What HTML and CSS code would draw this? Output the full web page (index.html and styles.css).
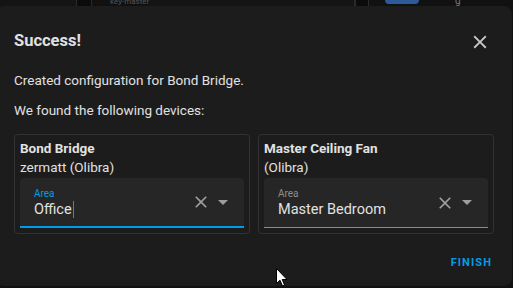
FILE: index.html
```html
<!DOCTYPE html>
<html>
<head>
<meta charset="utf-8">
<link rel="stylesheet" href="styles.css">
</head>
<body>
<div class="backdrop">
  <div class="bg-strip">
    <div class="bg-left"></div>
    <div class="bg-block"></div>
    <div class="bg-text">key-master</div>
    <div class="bg-spacer"></div>
    <div class="bg-block small"></div>
    <div class="bg-pill"></div>
    <div class="bg-g">g</div>
  </div>
  <div class="dialog">
    <div class="dialog-header">
      <h2 class="title">Success!</h2>
      <svg class="close" viewBox="0 0 24 24" width="22" height="22"><path d="M19,6.41L17.59,5L12,10.59L6.41,5L5,6.41L10.59,12L5,17.59L6.41,19L12,13.41L17.59,19L19,17.59L13.41,12L19,6.41Z" fill="#c8c8c8"/></svg>
    </div>
    <p class="text">Created configuration for Bond Bridge.</p>
    <p class="text">We found the following devices:</p>
    <div class="devices">
      <div class="card">
        <div class="name">Bond Bridge</div>
        <div class="model">zermatt (Olibra)</div>
        <div class="field focused">
          <div class="field-main">
            <div class="label">Area</div>
            <div class="value">Office<span class="caret"></span></div>
          </div>
          <svg class="clear" viewBox="0 0 24 24" width="20" height="20"><path d="M19,6.41L17.59,5L12,10.59L6.41,5L5,6.41L10.59,12L5,17.59L6.41,19L12,13.41L17.59,19L19,17.59L13.41,12L19,6.41Z" fill="#9e9e9e"/></svg>
          <svg class="arrow" viewBox="0 0 10 5" width="10" height="5"><path d="M0 0 L10 0 L5 5 Z" fill="#9e9e9e"/></svg>
        </div>
      </div>
      <div class="card">
        <div class="name">Master Ceiling Fan</div>
        <div class="model">(Olibra)</div>
        <div class="field">
          <div class="field-main">
            <div class="label">Area</div>
            <div class="value">Master Bedroom</div>
          </div>
          <svg class="clear" viewBox="0 0 24 24" width="20" height="20"><path d="M19,6.41L17.59,5L12,10.59L6.41,5L5,6.41L10.59,12L5,17.59L6.41,19L12,13.41L17.59,19L19,17.59L13.41,12L19,6.41Z" fill="#9e9e9e"/></svg>
          <svg class="arrow" viewBox="0 0 10 5" width="10" height="5"><path d="M0 0 L10 0 L5 5 Z" fill="#9e9e9e"/></svg>
        </div>
      </div>
    </div>
    <div class="actions">
      <span class="finish">FINISH</span>
    </div>
  </div>
  <svg class="cursor" viewBox="0 0 12 19" width="12" height="19"><path d="M0.5 0.5 L0.5 15.5 L4 12.2 L6.5 18 L8.6 17.1 L6.2 11.5 L11 11.5 Z" fill="#fff" stroke="#000" stroke-width="1"/></svg>
</div>
</body>
</html>
```

FILE: styles.css
```css
* { box-sizing: border-box; }
html, body {
  margin: 0;
  padding: 0;
  background: #111111;
  width: 513px;
  height: 288px;
  overflow: hidden;
  font-family: Roboto, "Noto Sans", sans-serif;
}
.backdrop {
  position: relative;
  width: 513px;
  height: 288px;
}
.bg-strip {
  display: flex;
  height: 6px;
  align-items: flex-start;
  overflow: hidden;
}
.bg-left {
  width: 77px;
  height: 6px;
  background: #141414;
  border-right: 1px solid #2a2a2a;
}
.bg-block {
  width: 15px;
  height: 6px;
  background: #0b0b0b;
  border-right: 1px solid #2a2a2a;
}
.bg-block.small { width: 14px; border-left: 1px solid #2a2a2a; }
.bg-text {
  margin-left: 18px;
  font-size: 8px;
  line-height: 4px;
  color: #555;
}
.bg-spacer { flex: 1; height: 6px; background: #141414; border-right: 1px solid #2a2a2a; }
.bg-pill {
  margin-left: 16px;
  width: 34px;
  height: 4px;
  background: #2f5a99;
  border-radius: 0 0 4px 4px;
}
.bg-g {
  margin-left: 36px;
  font-size: 10px;
  line-height: 2px;
  color: #777;
  width: 58px;
}
.dialog {
  margin-left: -4px;
  width: 516px;
  height: 280px;
  background: #1c1c1c;
  border-radius: 8px;
  padding: 0 18px 0 18px;
  display: flex;
  flex-direction: column;
}
.dialog-header {
  display: flex;
  align-items: center;
  justify-content: space-between;
  height: 24px;
  margin-top: 22px;
}
.title {
  margin: 0;
  font-size: 16.5px;
  font-weight: 700;
  color: #e1e1e1;
}
.close {
  margin-right: 3px;
  margin-top: 4px;
}
.text {
  margin: 0;
  font-size: 13.5px;
  color: #e1e1e1;
  line-height: 16px;
}
.dialog-header + .text { margin-top: 20px; }
.text + .text { margin-top: 14px; }
.devices {
  display: flex;
  gap: 8px;
  margin-top: 16px;
}
.card {
  width: 236px;
  height: 100px;
  border: 1px solid #333;
  border-radius: 4px;
  padding: 4px 5px 0 5px;
}
.name {
  font-size: 13.5px;
  font-weight: 700;
  color: #e1e1e1;
  line-height: 18px;
}
.model {
  font-size: 13.5px;
  color: #e1e1e1;
  line-height: 20px;
}
.field {
  margin-top: 1px;
  height: 50px;
  background: #262626;
  border-radius: 4px 4px 0 0;
  border-bottom: 1px solid #8a8a8a;
  display: flex;
  align-items: center;
  padding: 0 16px 0 14px;
}
.field.focused { border-bottom: 2px solid #039be5; }
.field-main {
  flex: 1;
  padding-top: 3px;
}
.label {
  font-size: 10px;
  color: #8e8e8e;
  line-height: 12px;
}
.focused .label { color: #039be5; }
.value {
  font-size: 14.5px;
  color: #e1e1e1;
  line-height: 20px;
  display: flex;
  align-items: center;
}
.caret {
  display: inline-block;
  width: 1px;
  height: 17px;
  background: #039be5;
  margin-left: 1px;
}
.clear { margin-right: 7px; }
.actions {
  display: flex;
  justify-content: flex-end;
  margin-top: 22px;
  padding-right: 2px;
}
.finish {
  font-size: 11px;
  font-weight: 700;
  letter-spacing: 1.1px;
  color: #039be5;
}
.cursor {
  position: absolute;
  left: 276px;
  top: 268px;
}
```
